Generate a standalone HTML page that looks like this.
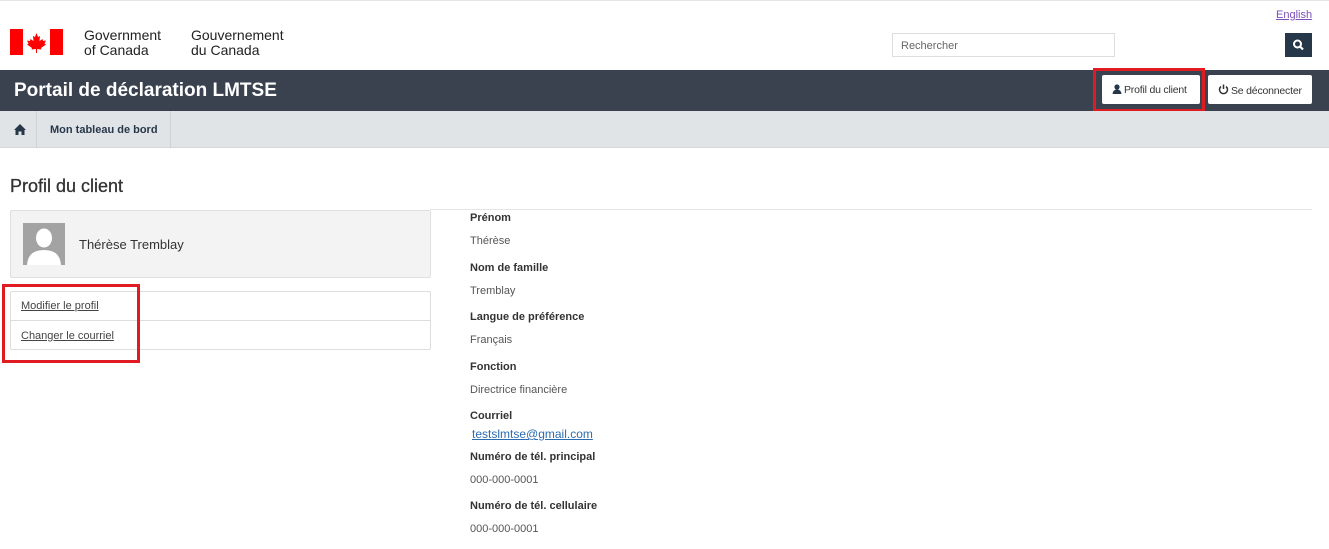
<!DOCTYPE html>
<html><head><meta charset="utf-8"><style>
*{box-sizing:border-box;margin:0;padding:0}
body{width:1329px;height:549px;overflow:hidden;background:#fff;font-family:"Liberation Sans",sans-serif;color:#333;position:relative}
.a{position:absolute}
.lbl{position:absolute;left:470px;font-size:11px;font-weight:bold;color:#333}
.val{position:absolute;left:470px;font-size:11px;color:#555}
</style></head><body>
<div class="a" style="left:0;top:0;width:1329px;height:1px;background:#e6e6e6"></div>
<a class="a" style="left:1276px;top:9px;font-size:11px;color:#7b4fb8;text-decoration:underline">English</a>
<svg class="a" style="left:10px;top:29px" width="53" height="26" viewBox="0 0 53 26">
<rect x="0" y="0" width="13" height="26" fill="#f00"/><rect x="40" y="0" width="13" height="26" fill="#f00"/>
<path d="M26.5 4 L28 8 L30 7 L29.5 12 L32.5 10 L33 12 L36 11.5 L34.5 14.5 L36 15.5 L31 19 L31.5 20.5 L27 20 L27 24 L26 24 L26 20 L21.5 20.5 L22 19 L17 15.5 L18.5 14.5 L17 11.5 L20 12 L20.5 10 L23.5 12 L23 7 L25 8 Z" fill="#f00"/></svg>
<div class="a" style="left:84px;top:28px;font-size:14px;line-height:15px;color:#222">Government<br>of Canada</div>
<div class="a" style="left:191px;top:28px;font-size:14px;line-height:15px;color:#222">Gouvernement<br>du Canada</div>
<div class="a" style="left:892px;top:33px;width:223px;height:24px;border:1px solid #ddd;font-size:11px;color:#666;padding:6px 8px">Rechercher</div>
<div class="a" style="left:1285px;top:33px;width:27px;height:24px;background:#26374a"><svg width="27" height="24"><circle cx="12.5" cy="11" r="3.5" stroke="#fff" stroke-width="2" fill="none"/><line x1="15" y1="13.5" x2="18" y2="16.5" stroke="#fff" stroke-width="2.2"/></svg></div>
<div class="a" style="left:0;top:70px;width:1329px;height:41px;background:#3a414f"></div>
<div class="a" style="left:14px;top:80px;font-size:19px;font-weight:bold;color:#fff">Portail de déclaration LMTSE</div>
<div class="a" style="left:1102px;top:75px;width:98px;height:29px;background:#fff;border-radius:2px;font-size:10.5px;color:#333;padding-top:9px;padding-left:10px;letter-spacing:-0.2px"><svg width="10" height="10" style="vertical-align:-1px;margin-right:2px"><circle cx="5" cy="3" r="2.6" fill="#26374a"/><path d="M0.5 10 Q1 5.5 5 5.5 Q9 5.5 9.5 10Z" fill="#26374a"/></svg>Profil du client</div>
<div class="a" style="left:1208px;top:75px;width:104px;height:29px;background:#fff;border-radius:2px;font-size:10.5px;color:#333;padding-top:9px;padding-left:10px;letter-spacing:-0.2px"><svg width="11" height="11" style="vertical-align:-1px;margin-right:2px"><path d="M3 2.5 A4 4 0 1 0 8 2.5" stroke="#333" stroke-width="1.5" fill="none"/><line x1="5.5" y1="0.5" x2="5.5" y2="5" stroke="#333" stroke-width="1.5"/></svg>Se déconnecter</div>
<div class="a" style="left:1093px;top:68px;width:112px;height:44px;border:3px solid #e11b22"></div>
<div class="a" style="left:0;top:111px;width:1329px;height:37px;background:#e1e4e7;border-bottom:1px solid #d5d8db"></div>
<div class="a" style="left:36px;top:111px;width:1px;height:37px;background:#cfd2d5"></div>
<div class="a" style="left:170px;top:111px;width:1px;height:37px;background:#cfd2d5"></div>
<svg class="a" style="left:14px;top:124px" width="12" height="11"><path d="M6 0 L12 6 L10.5 6 L10.5 11 L7.5 11 L7.5 7.5 L4.5 7.5 L4.5 11 L1.5 11 L1.5 6 L0 6Z" fill="#26374a"/></svg>
<div class="a" style="left:50px;top:124px;font-size:11px;font-weight:bold;color:#26374a">Mon tableau de bord</div>
<div class="a" style="left:10px;top:176px;font-size:18px;color:#333;-webkit-text-stroke:0.3px #333">Profil du client</div>
<div class="a" style="left:430px;top:209px;width:882px;height:1px;background:#e5e5e5"></div>
<div class="a" style="left:10px;top:210px;width:421px;height:68px;background:#f3f3f3;border:1px solid #e0e0e0;border-radius:2px"></div>
<svg class="a" style="left:23px;top:223px" width="42" height="42"><rect width="42" height="42" fill="#a3a3a3"/><ellipse cx="21" cy="15" rx="8" ry="9.5" fill="#fff"/><path d="M4 42 Q5 27 21 27 Q37 27 38 42Z" fill="#fff"/></svg>
<div class="a" style="left:79px;top:237px;font-size:13px;color:#333">Thérèse Tremblay</div>
<div class="a" style="left:10px;top:291px;width:421px;height:59px;border:1px solid #ddd;border-radius:2px"></div>
<div class="a" style="left:10px;top:320px;width:421px;height:1px;background:#ddd"></div>
<a class="a" style="left:21px;top:300px;font-size:11px;color:#444;text-decoration:underline">Modifier le profil</a>
<a class="a" style="left:21px;top:330px;font-size:11px;color:#444;text-decoration:underline">Changer le courriel</a>
<div class="a" style="left:2px;top:284px;width:138px;height:79px;border:3px solid #e11b22"></div>
<div class="lbl" style="top:212px">Prénom</div><div class="val" style="top:235px">Thérèse</div>
<div class="lbl" style="top:262px">Nom de famille</div><div class="val" style="top:285px">Tremblay</div>
<div class="lbl" style="top:311px">Langue de préférence</div><div class="val" style="top:334px">Français</div>
<div class="lbl" style="top:361px">Fonction</div><div class="val" style="top:384px">Directrice financière</div>
<div class="lbl" style="top:410px">Courriel</div>
<a class="a" style="left:472px;top:427px;font-size:12px;color:#2b6cb0;text-decoration:underline">testslmtse@gmail.com</a>
<div class="lbl" style="top:451px">Numéro de tél. principal</div><div class="val" style="top:474px">000-000-0001</div>
<div class="lbl" style="top:500px">Numéro de tél. cellulaire</div><div class="val" style="top:523px">000-000-0001</div>
</body></html>
